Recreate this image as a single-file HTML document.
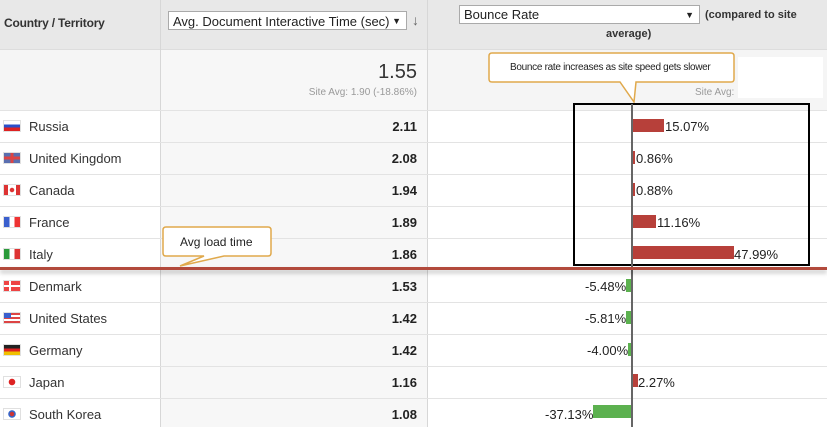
<!DOCTYPE html><html><head><style>
body{margin:0;width:827px;height:427px;overflow:hidden;background:#fff;font-family:"Liberation Sans",Arial,sans-serif;position:relative}
.a{position:absolute}
.hd{left:0;top:0;width:827px;height:49px;background:#e8e8e8;border-bottom:1px solid #ddd}
.sum{left:0;top:50px;width:827px;height:60px;background:#f5f5f5}
.c2{left:161px;top:50px;width:266px;height:377px;background:#f7f7f7}
.vl{top:0;width:1px;height:427px;background:#d7d7d7}
.hl{left:0;width:827px;height:1px;background:#e3e3e3}
.nm{left:29px;font-size:13px;color:#333}
.val{right:410px;font-size:13px;font-weight:bold;color:#222;text-align:right}
.fl{left:4px;width:16px;height:10px;box-shadow:0 0 0 1px rgba(0,0,0,.12)}
.bar{height:13px}
.pct{font-size:13px;color:#222}
</style></head><body>
<div class="a hd"></div>
<div class="a sum"></div>
<div class="a c2"></div>
<div class="a vl" style="left:160px"></div>
<div class="a vl" style="left:427px"></div>
<div class="a hl" style="top:110px"></div>
<div class="a hl" style="top:142px"></div><div class="a hl" style="top:174px"></div><div class="a hl" style="top:206px"></div><div class="a hl" style="top:238px"></div><div class="a hl" style="top:302px"></div><div class="a hl" style="top:334px"></div><div class="a hl" style="top:366px"></div><div class="a hl" style="top:398px"></div>
<div class="a" style="left:4px;top:16px;font-size:12px;font-weight:bold;color:#333;letter-spacing:-.2px">Country / Territory</div>
<div class="a" style="left:168px;top:11px;width:239px;height:19px;background:#fff;border:1px solid #aaa;font-size:13px;line-height:19px;padding-left:4px;box-sizing:border-box;color:#222">Avg. Document Interactive Time (sec)<span style="position:absolute;right:5px;font-size:9px">▼</span></div>
<div class="a" style="left:412px;top:12px;font-size:14px;color:#666">↓</div>
<div class="a" style="left:459px;top:5px;width:241px;height:19px;background:#fff;border:1px solid #aaa;box-sizing:border-box;font-size:13px;line-height:18px;padding-left:4px;color:#222">Bounce Rate<span style="position:absolute;right:5px;font-size:9px">▼</span></div>
<div class="a" style="left:705px;top:9px;font-size:11px;font-weight:bold;color:#333">(compared to site</div>
<div class="a" style="left:606px;top:28px;font-size:11px;font-weight:bold;color:#333">average)</div>
<div class="a" style="right:410px;top:61px;font-size:20px;color:#333">1.55</div>
<div class="a" style="right:410px;top:87px;font-size:10px;color:#999">Site Avg: 1.90 (-18.86%)</div>
<div class="a" style="left:695px;top:87px;font-size:10px;color:#999">Site Avg:</div>
<div class="a" style="left:738px;top:57px;width:85px;height:41px;background:#fff"></div>
<svg class="a" style="left:488px;top:52px" width="250" height="52"><path d="M4 1H243Q246 1 246 4V27Q246 30 243 30H148L146 50L132 30H4Q1 30 1 27V4Q1 1 4 1Z" fill="#fff" stroke="#e0a94c" stroke-width="1.5"/></svg>
<div class="a" style="left:510px;top:62px;font-size:10px;color:#222;letter-spacing:-.3px">Bounce rate increases as site speed gets slower</div>
<div class="a" style="left:573px;top:103px;width:233px;height:159px;border:2px solid #000"></div>
<div class="a" style="left:631px;top:104px;width:2px;height:323px;background:#666"></div>
<div class="a fl" style="top:121px;background:linear-gradient(#fff 0 33%,#2a4fc9 33% 66%,#d22 66%)"></div><div class="a nm" style="top:119px">Russia</div><div class="a val" style="top:119px">2.11</div>
<div class="a fl" style="top:153px;background:linear-gradient(90deg,transparent 0 40%,#d44 40% 60%,transparent 60%),linear-gradient(transparent 0 35%,#d44 35% 65%,transparent 65%),#5a6fb0"></div><div class="a nm" style="top:151px">United Kingdom</div><div class="a val" style="top:151px">2.08</div>
<div class="a fl" style="top:185px;background:radial-gradient(circle,#d33 0 2px,transparent 2.5px),linear-gradient(90deg,#d33 0 25%,#fff 25% 75%,#d33 75%)"></div><div class="a nm" style="top:183px">Canada</div><div class="a val" style="top:183px">1.94</div>
<div class="a fl" style="top:217px;background:linear-gradient(90deg,#3a5fcd 0 33%,#fff 33% 66%,#e33 66%)"></div><div class="a nm" style="top:215px">France</div><div class="a val" style="top:215px">1.89</div>
<div class="a fl" style="top:249px;background:linear-gradient(90deg,#2a9a3a 0 33%,#fff 33% 66%,#d33 66%)"></div><div class="a nm" style="top:247px">Italy</div><div class="a val" style="top:247px">1.86</div>
<div class="a fl" style="top:281px;background:linear-gradient(90deg,transparent 0 31%,#fff 31% 44%,transparent 44%),linear-gradient(transparent 0 40%,#fff 40% 60%,#e44 60%),#e44"></div><div class="a nm" style="top:279px">Denmark</div><div class="a val" style="top:279px">1.53</div>
<div class="a fl" style="top:313px;background:linear-gradient(#3a5fcd 0 50%,transparent 50%) 0 0/45% 100% no-repeat,repeating-linear-gradient(#d44 0 2px,#fff 2px 4px)"></div><div class="a nm" style="top:311px">United States</div><div class="a val" style="top:311px">1.42</div>
<div class="a fl" style="top:345px;background:linear-gradient(#222 0 33%,#d22 33% 66%,#f0c000 66%)"></div><div class="a nm" style="top:343px">Germany</div><div class="a val" style="top:343px">1.42</div>
<div class="a fl" style="top:377px;background:radial-gradient(circle,#d22 0 3px,#fff 3.5px)"></div><div class="a nm" style="top:375px">Japan</div><div class="a val" style="top:375px">1.16</div>
<div class="a fl" style="top:409px;background:radial-gradient(circle,#c33 0 2px,#36c 2.5px 3.5px,#fff 4px)"></div><div class="a nm" style="top:407px">South Korea</div><div class="a val" style="top:407px">1.08</div>
<div class="a bar" style="left:633px;top:119px;width:31px;background:#b7403a"></div><div class="a pct" style="left:665px;top:119px">15.07%</div>
<div class="a bar" style="left:633px;top:151px;width:2px;background:#b7403a"></div><div class="a pct" style="left:636px;top:151px">0.86%</div>
<div class="a bar" style="left:633px;top:183px;width:2px;background:#b7403a"></div><div class="a pct" style="left:636px;top:183px">0.88%</div>
<div class="a bar" style="left:633px;top:215px;width:23px;background:#b7403a"></div><div class="a pct" style="left:657px;top:215px">11.16%</div>
<div class="a bar" style="left:633px;top:246px;width:101px;background:#b7403a"></div><div class="a pct" style="left:734px;top:247px">47.99%</div>
<div class="a bar" style="left:626px;top:279px;width:5px;background:#5cb14f"></div><div class="a pct" style="left:585px;top:279px">-5.48%</div>
<div class="a bar" style="left:626px;top:311px;width:5px;background:#5cb14f"></div><div class="a pct" style="left:585px;top:311px">-5.81%</div>
<div class="a bar" style="left:628px;top:343px;width:3px;background:#5cb14f"></div><div class="a pct" style="left:587px;top:343px">-4.00%</div>
<div class="a bar" style="left:633px;top:374px;width:5px;background:#b7403a"></div><div class="a pct" style="left:638px;top:375px">2.27%</div>
<div class="a bar" style="left:593px;top:405px;width:38px;background:#5cb14f"></div><div class="a pct" style="left:545px;top:407px">-37.13%</div>
<div class="a" style="left:0;top:267px;width:827px;height:3px;background:#b24a3c;box-shadow:0 3px 4px rgba(0,0,0,.25)"></div>
<svg class="a" style="left:162px;top:226px" width="115" height="42"><path d="M4 1H106Q109 1 109 4V27Q109 30 106 30H62L18 40L42 30H4Q1 30 1 27V4Q1 1 4 1Z" fill="#fff" stroke="#e0a94c" stroke-width="1.5"/></svg>
<div class="a" style="left:180px;top:235px;font-size:12px;color:#222">Avg load time</div>
</body></html>
